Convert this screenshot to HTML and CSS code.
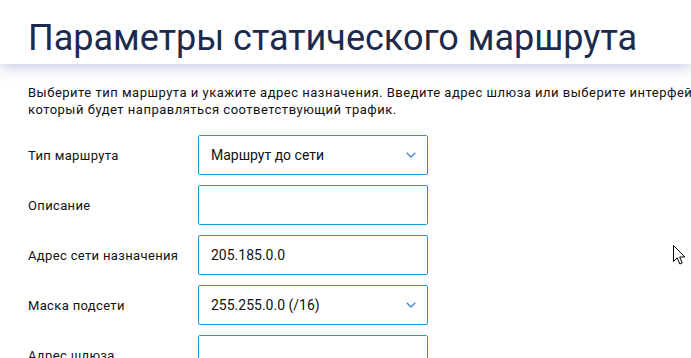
FILE: index.html
```html
<!DOCTYPE html>
<html lang="ru">
<head>
<meta charset="utf-8">
<title>Параметры статического маршрута</title>
<link rel="stylesheet" href="styles.css">
</head>
<body>
<header class="page-header">
  <h1 class="page-title">Параметры статического маршрута</h1>
</header>
<main class="content">
  <p class="intro"><span class="line">Выберите тип маршрута и укажите адрес назначения. Введите адрес шлюза или выберите интерфейс, через</span><span class="line">который будет направляться соответствующий трафик.</span></p>
  <div class="form">
    <div class="row">
      <label class="label">Тип маршрута</label>
      <div class="field select"><span class="value">Маршрут до сети</span><svg class="chev" width="10" height="6" viewBox="0 0 10 6"><path d="M0.7 0.7 L5 5 L9.3 0.7" fill="none" stroke="#4a8ad4" stroke-width="1.4"/></svg></div>
    </div>
    <div class="row">
      <label class="label">Описание</label>
      <div class="field"><span class="value"></span></div>
    </div>
    <div class="row">
      <label class="label">Адрес сети назначения</label>
      <div class="field"><span class="value">205.185.0.0</span></div>
    </div>
    <div class="row">
      <label class="label">Маска подсети</label>
      <div class="field select"><span class="value">255.255.0.0 (/16)</span><svg class="chev" width="10" height="6" viewBox="0 0 10 6"><path d="M0.7 0.7 L5 5 L9.3 0.7" fill="none" stroke="#4a8ad4" stroke-width="1.4"/></svg></div>
    </div>
    <div class="row">
      <label class="label">Адрес шлюза</label>
      <div class="field"><span class="value"></span></div>
    </div>
  </div>
</main>
<svg class="cursor" width="13" height="21" viewBox="0 0 13 21"><path d="M0.5 0.5 L0.5 16.5 L4.2 12.8 L6.8 19 L9.2 18 L6.7 12 L11.8 12 Z" fill="#fff" stroke="#000" stroke-width="1" stroke-linejoin="miter"/></svg>
</body>
</html>
```

FILE: styles.css
```css
html, body {
  margin: 0;
  padding: 0;
  background: #ffffff;
  overflow: hidden;
  width: 691px;
  height: 358px;
}
body {
  font-family: Roboto, "Liberation Sans", sans-serif;
  color: #111;
  position: relative;
}
.page-header {
  height: 64px;
  background: #fff;
  box-shadow: 0 3px 14px rgba(40, 60, 150, 0.28);
  position: relative;
  z-index: 1;
  padding-left: 28px;
  box-sizing: border-box;
}
.page-title {
  margin: 0;
  font-weight: 400;
  font-size: 36px;
  line-height: 76px;
  color: #1b2b4d;
  white-space: nowrap;
  letter-spacing: 0;
}
.content {
  padding: 20px 0 0 28px;
}
.intro {
  margin: 0;
  font-size: 13px;
  line-height: 17px;
  color: #111;
  white-space: nowrap;
  letter-spacing: 0.5px;
}
.intro .line {
  display: block;
}
.form {
  margin-top: 17px;
  display: flex;
  flex-direction: column;
  gap: 10px;
}
.row {
  display: flex;
  align-items: center;
  height: 40px;
}
.label {
  width: 170px;
  font-size: 13px;
  color: #111;
  letter-spacing: 0.35px;
}
.field {
  width: 230px;
  height: 40px;
  box-sizing: border-box;
  border: 1px solid #1a9bd8;
  border-radius: 2px;
  display: flex;
  align-items: center;
  justify-content: space-between;
  padding: 0 11px 0 12px;
  font-size: 14px;
  color: #111;
}
.chev {
  display: block;
}
.cursor {
  position: absolute;
  left: 673px;
  top: 245px;
}
```
